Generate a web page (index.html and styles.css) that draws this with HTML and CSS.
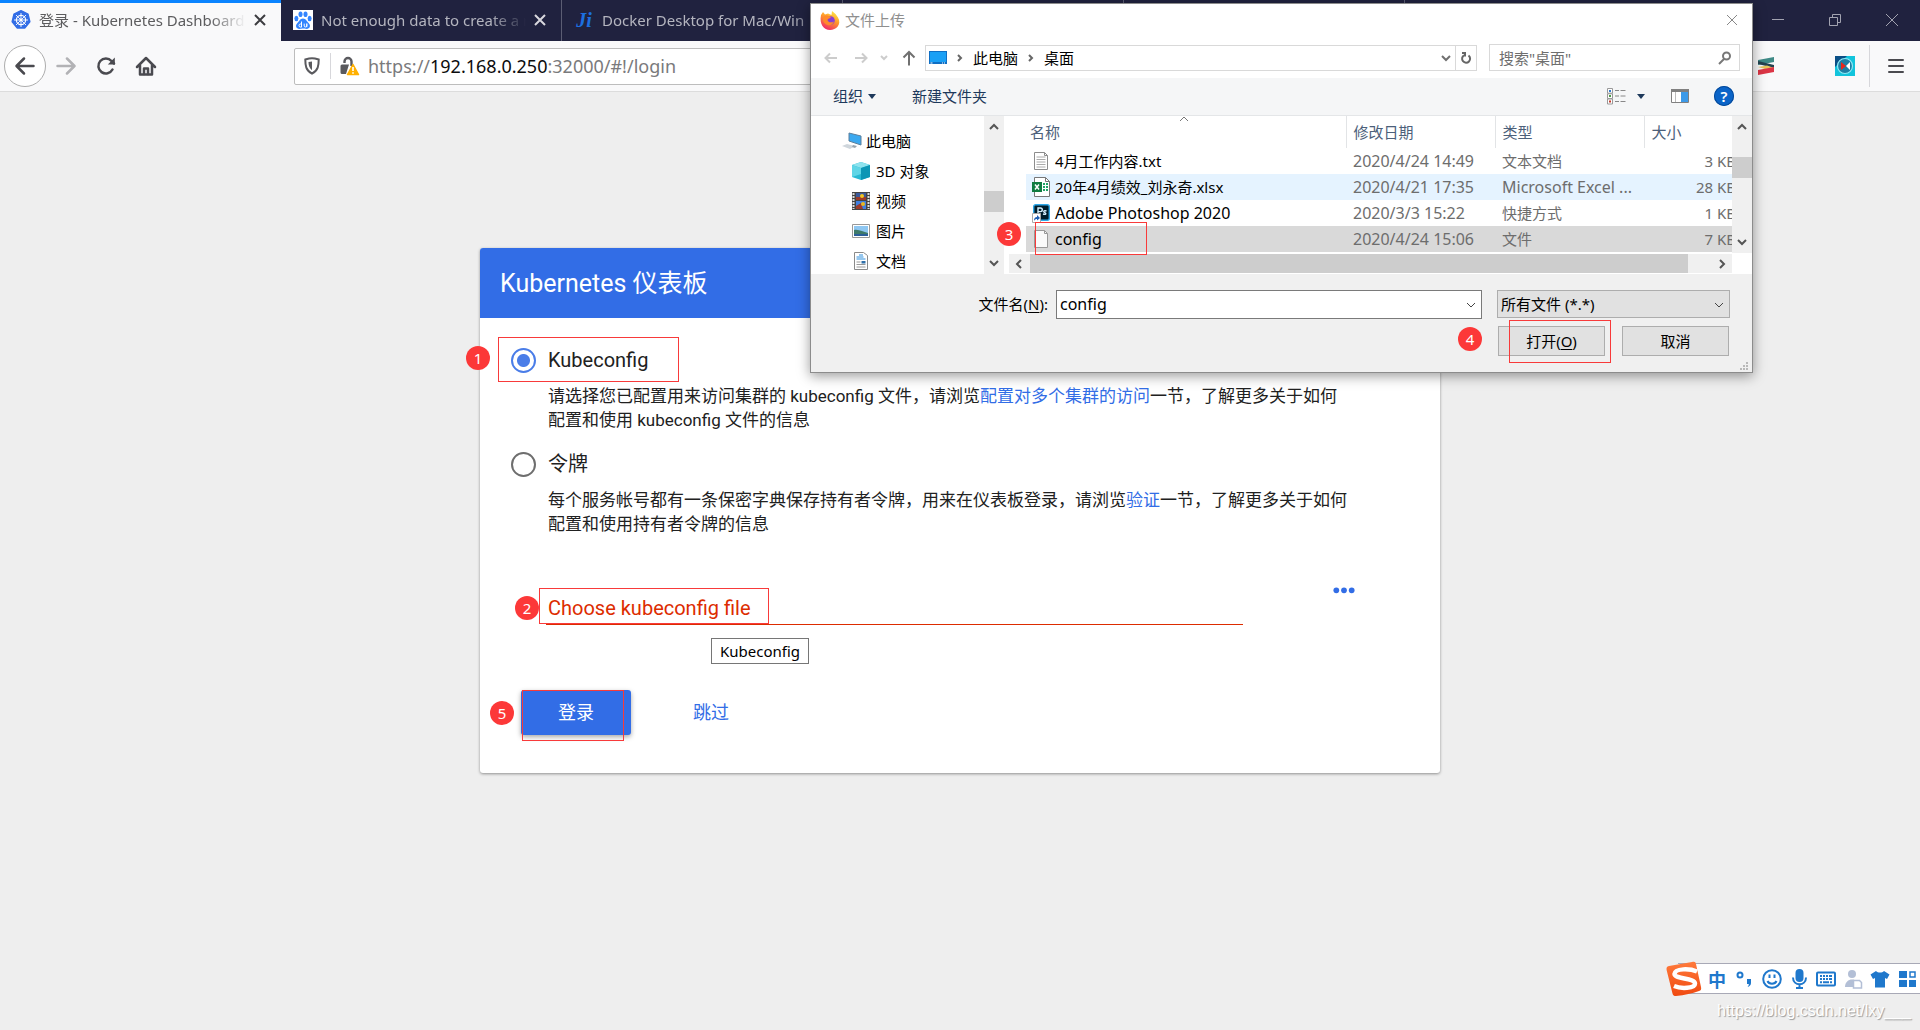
FILE: index.html
```html
<!DOCTYPE html>
<html lang="zh-CN">
<head>
<meta charset="utf-8">
<title>登录 - Kubernetes Dashboard</title>
<link rel="stylesheet" href="styles.css">
</head>
<body>
<header class="browser">
  <div class="tabstrip">
    <div class="tab tab-active">
      <svg class="favicon" viewBox="0 0 20 20"><path d="M10 .8l7 3.3 1.8 7.6-4.9 6.2H6.1L1.200 11.700 3 4.100z" fill="#326de6" stroke="#326de6" stroke-width="1.500" stroke-linejoin="round"/><g fill="none" stroke="#fff" stroke-width="1.200"><circle cx="10" cy="10" r="4.600"/><path d="M10 3v14M3 10h14M5 5l10 10M15 5L5 15" stroke-width=".9"/></g><circle cx="10" cy="10" r="1.400" fill="#fff"/></svg>
      <span class="tab-title">登录 - Kubernetes Dashboard</span>
      <button class="tab-close" aria-label="关闭标签页"><svg viewBox="0 0 12 12"><path d="M1 1l10 10M11 1L1 11"/></svg></button>
    </div>
    <div class="tab">
      <svg class="favicon" viewBox="0 0 20 20"><path fill="#fff" d="M0 0h20v20H0z"/><g fill="#3385ff"><ellipse cx="3.400" cy="8.500" rx="2" ry="2.700"/><ellipse cx="7.500" cy="4.300" rx="2" ry="2.800"/><ellipse cx="12.500" cy="4.300" rx="2" ry="2.800"/><ellipse cx="16.600" cy="8.500" rx="2" ry="2.700"/><path d="M10 8.500c3 0 3.800 3 5.800 4.800 2.200 2.200 1.200 5.700-2.300 5.700-1.500 0-2-.4-3.500-.4s-2 .4-3.500.4C3 19 2 15.500 4.200 13.300 6.200 11.500 7 8.500 10 8.500z"/></g><path d="M8.500 11.500v5.700M8.500 14H7.200c-1.600 0-1.600 3 0 3h1.300M11.200 13.600v2.400c0 1.300 2.600 1.300 2.600 0v-2.400 3.500" fill="none" stroke="#fff"/></svg>
      <span class="tab-title">Not enough data to create a new</span>
      <button class="tab-close" aria-label="关闭标签页"><svg viewBox="0 0 12 12"><path d="M1 1l10 10M11 1L1 11"/></svg></button>
    </div>
    <div class="tab">
      <span class="favicon favicon-text">Ji</span>
      <span class="tab-title">Docker Desktop for Mac/Win</span>
    </div>
    <div class="tab"></div>
    <div class="tab"></div>
    <div class="window-controls">
      <button aria-label="最小化"><svg viewBox="0 0 14 14"><path d="M1 6.500h12"/></svg></button>
      <button aria-label="还原"><svg viewBox="0 0 14 14"><path d="M1.500 4.500h8v8h-8zM4.500 4V1.500h8v8H10"/></svg></button>
      <button aria-label="关闭"><svg viewBox="0 0 14 14"><path d="M1 1l12 12M13 1L1 13"/></svg></button>
    </div>
  </div>
  <div class="navbar">
    <button class="nav-btn nav-back" aria-label="后退"><svg viewBox="0 0 20 20"><path d="M18.500 10H2M9 2.500L1.500 10 9 17.500"/></svg></button>
    <button class="nav-btn nav-off" aria-label="前进"><svg viewBox="0 0 20 20"><path d="M1.500 10H18M11 2.500l7.500 7.500-7.500 7.500"/></svg></button>
    <button class="nav-btn" aria-label="刷新"><svg viewBox="0 0 20 20"><path d="M16.500 13.500A7.500 7.500 0 1 1 15.500 5L18 7.500"/><path d="M18.800 1.500v7h-7z" fill="#4a4a4f" stroke="none"/></svg></button>
    <button class="nav-btn" aria-label="主页"><svg viewBox="0 0 20 20"><path d="M1 11l9-9 9 9M4 9.500V18.500h12V9.500"/><path d="M8 18v-5.500h4V18"/></svg></button>
    <div class="urlbar">
      <svg class="shield" viewBox="0 0 18 18"><path d="M9 1.200c2 0 4.200.5 6.700 1.300 0 6-.5 11-6.700 14.200C2.800 13.500 2.300 8.500 2.300 2.500 4.800 1.700 7 1.200 9 1.200z" fill="none" stroke="#5a5a5e" stroke-width="2"/><path d="M9 4.500v8.700C6.300 11 5.500 8.500 5.500 5z" fill="#5a5a5e"/></svg>
      <span class="url-sep"></span>
      <svg class="lock" viewBox="0 0 20 20"><path d="M4.500 7V5.500a3.500 3.500 0 0 1 7 0V10" fill="none" stroke="#5a5a5e" stroke-width="2.400"/><path d="M2 8.500h7L6 18H2a1.500 1.500 0 0 1-1.500-1.500V10A1.500 1.500 0 0 1 2 8.500z" fill="#5a5a5e"/><path d="M13 8.500l5.500 10h-11z" fill="#ffb000" stroke="#ffb000" stroke-width="1.500" stroke-linejoin="round"/><path d="M13 11v4M13 16.300v1.500" stroke="#fff" stroke-width="1.600"/></svg>
      <span class="url">https://<b>192.168.0.250</b>:32000/#!/login</span>
    </div>
    <div class="extensions">
      <svg class="ext-s" viewBox="0 0 18 20"><path d="M1 4l16-3v5L1 9z" fill="#3f8a86"/><path d="M1 5l16 4v3L1 8z" fill="#24424f"/><path d="M1 11l9-1.500 7 2.500-9 1z" fill="#e9c55b"/><path d="M1 14l16-3v5L1 19z" fill="#dc3545"/></svg>
      <svg class="ext-k" viewBox="0 0 20 20"><path fill="#12c4dc" d="M0 0h20v20H0z"/><path fill="#0a4f86" d="M0 0h12L0 11z"/><circle cx="10" cy="10" r="7.500" fill="#1e7fa5" stroke="#8fe9f5" stroke-width="1.200"/><path d="M6 6l5 4-5 4z" fill="#e8261c"/><path d="M15 6l-4 4 4 4z" fill="#fff"/></svg>
      <button class="menu-btn" aria-label="打开菜单"><svg viewBox="0 0 16 16"><path d="M1 2h14M1 8h14M1 14h14"/></svg></button>
    </div>
  </div>
</header>

<main class="page">
  <form class="card">
    <h1 class="card-title">Kubernetes 仪表板</h1>
    <div class="card-body">
      <div class="option marked">
        <label class="option-label"><input type="radio" name="auth" checked>Kubeconfig</label>
        <p class="option-text">请选择您已配置用来访问集群的 kubeconfig 文件，请浏览<a href="#access">配置对多个集群的访问</a>一节，了解更多关于如何<br>配置和使用 kubeconfig 文件的信息</p>
        <span class="box box-1"></span><span class="badge badge-1">1</span>
      </div>
      <div class="option">
        <label class="option-label"><input type="radio" name="auth">令牌</label>
        <p class="option-text">每个服务帐号都有一条保密字典保存持有者令牌，用来在仪表板登录，请浏览<a href="#auth">验证</a>一节，了解更多关于如何<br>配置和使用持有者令牌的信息</p>
      </div>
      <div class="file-row marked">
        <input class="file-input" type="text" placeholder="Choose kubeconfig file" aria-label="Choose kubeconfig file">
        <button type="button" class="more" aria-label="选择文件"><svg viewBox="0 0 20 6"><circle cx="3" cy="3" r="2.600"/><circle cx="10" cy="3" r="2.600"/><circle cx="17" cy="3" r="2.600"/></svg></button>
        <span class="box box-2"></span><span class="badge badge-2">2</span>
        <span class="tooltip" role="tooltip">Kubeconfig</span>
      </div>
      <div class="actions marked">
        <button type="button" class="login">登录</button>
        <button type="button" class="skip">跳过</button>
        <span class="box box-5"></span><span class="badge badge-5">5</span>
      </div>
    </div>
  </form>
</main>

<section class="dialog" role="dialog" aria-label="文件上传">
  <div class="dlg-title">
    <svg class="firefox" viewBox="0 0 20 20"><defs><linearGradient id="fx" x1=".8" y1="0" x2=".3" y2="1"><stop offset="0" stop-color="#fff04a"/><stop offset=".45" stop-color="#ff9a2b"/><stop offset="1" stop-color="#f0246b"/></linearGradient></defs><path d="M1 5l2-3 2 2.500 3-1L11.500 5 12 1l3.500 3 2.500 3.500c4 7-2 12.500-8 12.500S-1 14 1 5z" fill="url(#fx)"/><circle cx="10.500" cy="10.500" r="4.300" fill="#8a3fd1"/><path d="M4 6c3-1 5 0 7 1-1 2-3 1-3.500 3 .5 2.500 4 3 6.500 1.500-1 4-6 5-9 2S3 8 4 6z" fill="#ff8a2a"/></svg>
    <span>文件上传</span>
    <button class="dlg-close" aria-label="关闭"><svg viewBox="0 0 12 12"><path d="M1 1l10 10M11 1L1 11"/></svg></button>
  </div>
  <div class="dlg-nav">
    <button class="dn dn-off" aria-label="后退"><svg viewBox="0 0 14 12"><path d="M13 6H2M6 1.500L1.500 6 6 10.500"/></svg></button>
    <button class="dn dn-off" aria-label="前进"><svg viewBox="0 0 14 12"><path d="M1 6h11M8 1.500L12.500 6 8 10.500"/></svg></button>
    <button class="dn dn-off dn-small" aria-label="最近位置"><svg viewBox="0 0 14 12"><path d="M4 4l3 3 3-3"/></svg></button>
    <button class="dn dn-up" aria-label="上移"><svg viewBox="0 0 14 16"><path d="M7 15.500V2M1.500 7.500L7 2l5.500 5.500"/></svg></button>
    <div class="address">
      <svg class="desk" viewBox="0 0 18 13"><path d="M0 0h18v13H0z" fill="#0f6fc4"/><path d="M1 1h16v10H1z" fill="#1aa0f5"/><path d="M1.500 12h2M13 12h1M15 12h1" stroke="#fff"/></svg>
      <svg class="crumb-sep" viewBox="0 0 26 10"><path d="M11 2l3 3-3 3"/></svg><span>此电脑</span><svg class="crumb-sep" viewBox="0 0 26 10"><path d="M11 2l3 3-3 3"/></svg><span>桌面</span>
      <svg class="addr-drop" viewBox="0 0 10 8"><path d="M1 2l4 4 4-4"/></svg>
      <button class="addr-refresh" aria-label="刷新"><svg viewBox="0 0 12 14"><path d="M8.500 4.500A4 4 0 1 1 4 4.300M2 2h3v3.500"/></svg></button>
    </div>
    <label class="search"><input type="text" placeholder='搜索"桌面"' aria-label='搜索"桌面"'><svg viewBox="0 0 14 14"><circle cx="8.500" cy="5" r="3.500"/><path d="M6 8l-5 5"/></svg></label>
  </div>
  <div class="dlg-tools">
    <button class="tool">组织<i class="caret"></i></button>
    <button class="tool">新建文件夹</button>
    <div class="tool-right">
      <button class="tool view" aria-label="更改视图"><svg viewBox="0 0 19 17"><g fill="#fff" stroke="#999"><path d="M.5.5h5v4.700h-5zM.5 5.800h5v4.700h-5zM.5 11h5v5h-5z"/></g><path d="M2 2h2v2H2z" fill="#2f7bd0"/><path d="M2 7h2v2H2z" fill="#4b9a45"/><path d="M2 12.500h2v2H2z" fill="#c63a2b"/><path d="M8 2.500h4M13.500 2.500h5M8 8h4M13.500 8h5M8 13.500h4M13.500 13.500h5" stroke="#888"/></svg><i class="caret"></i></button>
      <button class="tool" aria-label="预览窗格"><svg class="pane-icon" viewBox="0 0 18 14"><path d="M.5.5h17v13H.5z" fill="#fff" stroke="#808080"/><path d="M0 0h18v3H0z" fill="#808080"/><path d="M10 3h7v10h-7z" fill="#3d9ae8"/><path d="M4.500 3v10" stroke="#bbb"/></svg></button>
      <button class="help" aria-label="帮助">?</button>
    </div>
  </div>
  <div class="panes marked">
    <ul class="tree">
      <li class="tree-root"><svg viewBox="0 0 20 18"><path d="M7 1l12 3v9L7 9z" fill="#3ba9f0" stroke="#5c7f9c"/><path d="M0 14l5-2 8 2-5 3z" fill="#cfd6dc"/><path d="M11 13l4 1-2 2-3-1z" fill="#9aa5ae"/></svg>此电脑</li>
      <li><svg viewBox="0 0 18 18"><path d="M9 0l9 3v12l-9 3-9-3V3z" fill="#28b9d3"/><path d="M9 0l9 3-9 3-9-3z" fill="#8fe3ee"/><path d="M9 6l9-3v12l-9 3z" fill="#0d96b5"/><path d="M0 3l9 3v6L0 15z" fill="#5fd5e6"/></svg>3D 对象</li>
      <li><svg viewBox="0 0 18 18"><path d="M0 0h18v18H0z" fill="#444"/><path d="M1.500 1v16M16.500 1v16" stroke="#ddd" stroke-width="2" stroke-dasharray="2 1"/><path d="M4 1h10v7H4z" fill="#3a5a9c"/><path d="M4 9h10v8H4z" fill="#3f7fe0"/><path d="M4 5h10v3H4zM4 14l5-3 2 6H4z" fill="#9c3a2a"/><circle cx="10" cy="4" r="2" fill="#f3c522"/><circle cx="11" cy="12" r="2" fill="#e8b81f"/></svg>视频</li>
      <li><svg viewBox="0 0 18 18"><path d="M.5 2.500h17v13H.5z" fill="#fff" stroke="#999"/><path d="M2 4h14v10H2z" fill="#8ec7f2"/><path d="M2 8c5-1 9 2 14 3v3H2z" fill="#3e7a6a"/><path d="M2 12h14v2H2z" fill="#2b5f9a"/></svg>图片</li>
      <li><svg viewBox="0 0 18 18"><path d="M2.500.5h9l4 3v14h-13z" fill="#fff" stroke="#8a8a8a"/><path d="M4.500 7h9M4.500 5h7M7 3h4" stroke="#2f8fdd" stroke-width="1.200"/><path d="M4.500 10h4M4.500 12.500h9M4.500 15h9" stroke="#999"/><path d="M9.500 9h4v2.500h-4z" fill="#2f6fa8"/></svg>文档</li>
    </ul>
    <div class="vscroll vscroll-tree"><svg viewBox="0 0 10 8"><path d="M1 6l4-4 4 4"/></svg><i class="thumb"></i><svg viewBox="0 0 10 8"><path d="M1 2l4 4 4-4"/></svg></div>
    <div class="files">
      <div class="list-row">
        <div class="list">
          <table>
            <colgroup><col class="c-name"><col class="c-date"><col class="c-type"><col class="c-size"></colgroup>
            <thead><tr><th>名称<svg class="sort" viewBox="0 0 10 6"><path d="M1 5l4-4 4 4"/></svg></th><th>修改日期</th><th>类型</th><th>大小</th></tr></thead>
            <tbody>
              <tr><td><svg viewBox="0 0 18 20"><path d="M2.500 1.500h10l3 3v14h-13z" fill="#fff" stroke="#8c8c8c"/><path d="M12.500 1.500v3h3" fill="none" stroke="#8c8c8c"/><path d="M4.500 6h9M4.500 8.500h9M4.500 11h9M4.500 13.500h9M4.500 16h9" stroke="#aaa"/></svg>4月工作内容.txt</td><td class="latin">2020/4/24 14:49</td><td>文本文档</td><td>3 KB</td></tr>
              <tr class="hover"><td><svg viewBox="0 0 18 20"><path d="M2.500.5h11l4 4v15h-15z" fill="#fff" stroke="#777"/><path d="M13.500.5v4h4" fill="none" stroke="#777"/><path d="M11 6h2v2h-2zM14 6h2v2h-2zM11 9h2v2h-2zM14 9h2v2h-2zM11 12h2v2h-2zM14 12h2v2h-2z" fill="#21a366"/><path d="M0 5h10v10H0z" fill="#107c41"/><path d="M3 7.500l4 5M7 7.500l-4 5" stroke="#fff" stroke-width="1.500"/></svg>20年4月绩效_刘永奇.xlsx</td><td class="latin">2020/4/21 17:35</td><td class="latin">Microsoft Excel ...</td><td>28 KB</td></tr>
              <tr><td><svg viewBox="0 0 18 20"><rect x="1.700" y="1.700" width="15.600" height="15.600" rx="2" fill="#001d2b" stroke="#2fa8e8" stroke-width="1.400"/><path d="M6 11V5h2.500a1.800 1.800 0 0 1 0 3.600H6M14.500 8c-3-1-3.500 1-1.700 1.700s1.200 2.300-1.800 1.300" fill="none" stroke="#d6f1ff" stroke-width="1.400"/><path d="M.5 10.500h8v9h-8z" fill="#fff" stroke="#aaa"/><path d="M2 18c0-3 1-4 3-4v-2l3 3-3 2.500V16c-1.500 0-2 .5-3 2z" fill="#1d5fb5"/></svg><span class="latin">Adobe Photoshop 2020</span></td><td class="latin">2020/3/3 15:22</td><td>快捷方式</td><td>1 KB</td></tr>
              <tr class="selected"><td><svg viewBox="0 0 18 20"><path d="M2.500 1.500h10l3 3v14h-13z" fill="#fafafa" stroke="#999"/><path d="M12.500 1.500v3h3" fill="none" stroke="#999"/></svg><span class="latin">config</span></td><td class="latin">2020/4/24 15:06</td><td>文件</td><td>7 KB</td></tr>
            </tbody>
          </table>
        </div>
        <div class="vscroll vscroll-list"><svg viewBox="0 0 10 8"><path d="M1 6l4-4 4 4"/></svg><i class="thumb"></i><svg viewBox="0 0 10 8"><path d="M1 2l4 4 4-4"/></svg></div>
      </div>
      <div class="hscroll"><svg viewBox="0 0 8 10"><path d="M6 1L2 5l4 4"/></svg><i class="thumb"></i><svg viewBox="0 0 8 10"><path d="M2 1l4 4-4 4"/></svg></div>
    </div>
    <span class="box box-3"></span><span class="badge badge-3">3</span>
  </div>
  <div class="dlg-foot marked">
    <div class="name-row">
      <label class="name-label" for="fname">文件名(<u>N</u>):</label>
      <div class="combo"><input id="fname" type="text" value="config"><svg viewBox="0 0 10 8"><path d="M1 2l4 4 4-4"/></svg></div>
      <div class="filter"><select aria-label="文件类型"><option>所有文件 (*.*)</option></select><svg viewBox="0 0 10 8"><path d="M1 2l4 4 4-4"/></svg></div>
    </div>
    <div class="btn-row"><button class="dlg-btn">打开(<u>O</u>)</button><button class="dlg-btn">取消</button></div>
    <svg class="grip" viewBox="0 0 8 8"><path d="M6 0h2v2H6zM3 3h2v2H3zM6 3h2v2H6zM0 6h2v2H0zM3 6h2v2H3zM6 6h2v2H6z" fill="#b8b8b8"/></svg>
    <span class="box box-4"></span><span class="badge badge-4">4</span>
  </div>
</section>

<aside class="ime">
  <svg class="ime-logo" viewBox="0 0 36 36"><defs><linearGradient id="so" x1="0" y1="0" x2="0" y2="1"><stop offset="0" stop-color="#ff7a3c"/><stop offset="1" stop-color="#f04a10"/></linearGradient></defs><path d="M3 5L26 1c3-.5 3.500 0 4 2l5 23c.5 2.500 0 3.500-2 4-7 2.500-14 4-23 5-2 0-3-.5-3.500-2.500L.6 9C.3 6.500.8 5.500 3 5z" fill="url(#so)"/><path d="M31 10.500C24 7.500 9 7 8.500 13c0 5 20.500 4 20.500 9.500 0 5-14 5.500-21 2.500" fill="none" stroke="#fff" stroke-width="4.500"/></svg>
  <span class="ime-zh">中</span>
  <svg viewBox="0 0 20 20"><circle cx="5" cy="6" r="2.500" fill="none" stroke="#1f78cc" stroke-width="2"/><path d="M12 10h4v4c0 2-1.500 3.500-3.500 4 1-1 1.300-2 1.300-3H12z" fill="#1f78cc"/></svg>
  <svg viewBox="0 0 20 20"><g fill="none" stroke="#1f78cc" stroke-width="2"><circle cx="10" cy="10" r="8.800"/><path d="M5.500 12c1.500 3.500 7.500 3.500 9 0M7.500 5.500v3.500M12.500 5.500v3.500"/></g></svg>
  <svg viewBox="0 0 20 20"><rect x="6.500" y="0" width="8" height="13" rx="4" fill="#1f78cc"/><path d="M4 8.500c0 9 13 9 13 0M10.500 15v4M7 19h7" fill="none" stroke="#1f78cc" stroke-width="2"/></svg>
  <svg viewBox="0 0 20 20"><rect x="1" y="3.500" width="18" height="13" rx="1" fill="none" stroke="#1f78cc" stroke-width="2"/><path d="M4 7h2M7 7h2M10 7h2M13 7h3M4 10h2M7 10h2M10 10h2M13 10h3M4 13.300h2M7 13.300h6M14 13.300h2" stroke="#1f78cc" stroke-width="2"/></svg>
  <svg viewBox="0 0 20 20"><circle cx="9" cy="5" r="4" fill="#b3bfd6"/><path d="M2 18c0-10 14-10 14 0z" fill="#b3bfd6"/><path d="M10.500 11.500h6l2 2v5.500h-8z" fill="#fff" stroke="#b3bfd6" stroke-width="1.500"/></svg>
  <svg viewBox="0 0 20 20"><path d="M6 2c2 2 6 2 8 0l5.500 3.500L17 10l-2-1v9.500H5V9l-2 1L.5 5.500z" fill="#1f78cc"/></svg>
  <svg viewBox="0 0 20 20"><path d="M2 2h8v7H2zM2 11h8v7H2zM12 11h7v7h-7z" fill="#1f78cc"/><path d="M13 3h5v5h-5z" fill="none" stroke="#1f78cc" stroke-width="1.500"/></svg>
</aside>
<span class="watermark">https://blog.csdn.net/lxy___</span>
</body>
</html>
```
FILE: styles.css
```css
* { box-sizing: border-box; }
body {
  margin: 0;
  min-height: 100vh;
  position: relative;
  overflow: hidden;
  background: #eee;
  font: 15px/20px "Noto Sans", "Noto Sans CJK SC", sans-serif;
  color: #000;
}
button, input, select { font: inherit; color: inherit; margin: 0; padding: 0; border: 0; background: none; border-radius: 0; outline: 0; }
svg { display: block; flex: none; overflow: visible; }

/* browser chrome */
.tabstrip { display: flex; height: 41px; background: #20223f; }
.tab { display: flex; align-items: center; gap: 8px; width: 281px; padding: 0 15px 1px 12px; border-right: 1px solid #5b5d73; color: #b4b5bf; }
.tab-active { background: #f9f9fa; border-top: 3px solid #0a84ff; border-right: 0; color: #5c5c5e; padding-bottom: 4px; padding-left: 11px; }
.favicon { width: 20px; height: 20px; flex: none; }
.favicon-text { font: italic bold 20px/20px "Liberation Serif", serif; color: #1c6fe0; text-align: center; }
.tab-title { flex: 1; overflow: hidden; white-space: nowrap; -webkit-mask-image: linear-gradient(to left, transparent, #000 36px); mask-image: linear-gradient(to left, transparent, #000 36px); }
.tab-close { width: 12px; height: 12px; }
.tab-close svg { width: 12px; fill: none; stroke: currentColor; stroke-width: 2; }
.tab-active .tab-close { color: #3c3c40; }
.tab:not(.tab-active) .tab-close { color: #d8d8de; }
.window-controls { margin-left: auto; display: flex; }
.window-controls button { width: 57px; display: grid; place-items: center; padding-bottom: 2px; }
.window-controls svg { width: 14px; fill: none; stroke: #a2a3b0; }
.navbar { display: flex; align-items: center; height: 51px; padding: 0 16px 0 4px; background: #f9f9fa; border-bottom: 1px solid #dcdcdc; }
.nav-btn { width: 40px; height: 42px; display: grid; place-items: center; }
.nav-btn svg { width: 20px; fill: none; stroke: #4a4a4f; stroke-width: 2.5; stroke-linecap: round; stroke-linejoin: round; }
.nav-back { width: 42px; border: 1px solid #adadad; border-radius: 50%; background: #fff; }
.nav-off { opacity: .4; }
.urlbar { flex: 1; display: flex; align-items: center; height: 37px; margin: 0 200px 0 128px; padding-left: 8px; background: #fff; border: 1px solid #bdbdbd; border-radius: 2px; }
.shield { width: 18px; }
.url-sep { width: 1px; height: 26px; margin: 0 9px; background: #d7d7db; }
.lock { width: 20px; }
.url { margin-left: 8px; font-size: 18px; color: #7a7a7c; }
.url b { font-weight: 400; color: #0c0c0d; }
.extensions { display: flex; align-items: center; }
.ext-s { width: 18px; margin-right: 60px; }
.ext-k { width: 20px; margin-right: 14px; }
.menu-btn { height: 42px; padding-left: 18px; border-left: 1px solid #d7d7db; }
.menu-btn svg { width: 16px; stroke: #4a4a4f; stroke-width: 2; stroke-linecap: round; }

/* login card */
.page { padding: 156px 24px 24px; }
.card { max-width: 960px; margin: 0 auto; background: #fff; border-radius: 3px; box-shadow: 0 1px 3px rgba(0, 0, 0, .4); font-family: Roboto, "Noto Sans CJK SC", sans-serif; color: #212121; }
.card-title { margin: 0; height: 70px; padding: 0 20px; border-radius: 3px 3px 0 0; background: #326de6; color: #fff; font-weight: 400; font-size: 25px; line-height: 72px; }
.card-body { padding: 18px 24px 38px 31px; }
.marked { position: relative; }
.option { margin-bottom: 8px; }
.option-label { display: flex; align-items: center; gap: 12px; height: 48px; font-size: 20px; }
.option-label input { appearance: none; width: 25px; height: 25px; border: 2px solid #6e6e6e; border-radius: 50%; }
.option-label input:checked { border-color: #4a7de8; background: radial-gradient(circle, #4a7de8 6px, transparent 7px); }
.option-text { margin: 0 0 0 37px; font-size: 17px; line-height: 24px; }
.option-text a { color: #326de6; text-decoration: none; }
.file-row { display: flex; align-items: flex-start; margin: 40px 53px 0 35px; padding-top: 16px; height: 66px; }
.file-input { flex: 1; height: 33px; padding-left: 2px; border-bottom: 1px solid #dd2c00; font-size: 20px; }
.file-input::placeholder { color: #dd2c00; opacity: 1; }
.more { margin: -5px 8px 0 90px; }
.more svg { width: 22px; fill: #326de6; }
.tooltip { position: absolute; left: 165px; top: 62px; width: 98px; height: 26px; border: 1px solid #767676; background: #fff; color: #000; font: 15px/24px "Noto Sans", sans-serif; text-align: center; }
.actions { display: flex; gap: 40px; margin: 48px 0 0 10px; font-size: 18px; }
.login { width: 110px; height: 45px; border-radius: 3px; background: #326de6; color: #fff; box-shadow: 0 2px 5px rgba(0, 0, 0, .35); }
.skip { width: 80px; height: 45px; color: #326de6; }

/* numbered marks */
.box { position: absolute; border: 1px solid #f83a3a; pointer-events: none; }
.badge { position: absolute; width: 24px; height: 24px; border-radius: 50%; background: #fc3838; color: #fff; font: 15px/24px "Noto Sans", sans-serif; text-align: center; }
.box-1 { left: -13px; top: 1px; width: 181px; height: 45px; }
.badge-1 { left: -45px; top: 10px; }
.box-2 { left: -7px; top: 12px; width: 230px; height: 36px; }
.badge-2 { left: -31px; top: 20px; }
.box-5 { left: 1px; top: 0; width: 102px; height: 51px; }
.badge-5 { left: -31px; top: 11px; }
.box-3 { left: 224px; top: 106px; width: 112px; height: 33px; }
.badge-3 { left: 186px; top: 106px; }
.box-4 { left: 698px; top: 46px; width: 102px; height: 43px; }
.badge-4 { left: 647px; top: 53px; }

/* file picker window */
.dialog { position: absolute; left: 810px; top: 3px; width: 943px; background: #fff; border: 1px solid #8c8c8c; box-shadow: 0 3px 12px rgba(0, 0, 0, .4); }
.dlg-title { display: flex; align-items: center; gap: 5px; height: 36px; padding: 0 14px 4px 9px; color: #8f8f8f; }
.firefox { width: 20px; }
.dlg-close { margin-left: auto; }
.dlg-close svg { width: 12px; fill: none; stroke: #888; }
.dlg-nav { display: flex; align-items: center; height: 38px; padding: 0 12px 3px 5px; }
.dn { width: 30px; display: grid; place-items: center; }
.dn svg { width: 14px; fill: none; stroke: #707070; stroke-width: 2; }
.dn-off { opacity: .35; }
.dn-small { width: 16px; }
.dn-up { width: 33px; }
.address { flex: 1; display: flex; align-items: center; height: 26px; padding-left: 3px; border: 1px solid #d9d9d9; }
.desk { width: 18px; }
.crumb-sep { width: 26px; fill: none; stroke: #666; stroke-width: 2; }
.addr-drop { width: 10px; margin: 0 4px 0 auto; fill: none; stroke: #707070; stroke-width: 2; }
.addr-refresh { width: 21px; height: 24px; display: grid; place-items: center; border-left: 1px solid #d9d9d9; }
.addr-refresh svg { width: 12px; fill: none; stroke: #666; stroke-width: 2; }
.search { display: flex; align-items: center; width: 251px; height: 27px; margin-left: 12px; padding: 0 7px 0 9px; border: 1px solid #d9d9d9; }
.search input { flex: 1; min-width: 0; }
.search input::placeholder { color: #6e6e6e; opacity: 1; }
.search svg { width: 14px; fill: none; stroke: #777; stroke-width: 2; }
.dlg-tools { display: flex; align-items: center; height: 38px; padding: 0 18px 1px 22px; background: #f5f6f7; border-bottom: 1px solid #e4e6e8; color: #1e395b; }
.tool { display: flex; align-items: center; margin-right: 36px; }
.caret { margin-left: 5px; border: 4px solid transparent; border-top: 5px solid #1e395b; border-bottom: 0; }
.tool-right { margin-left: auto; display: flex; align-items: center; }
.tool-right .tool { margin-right: 25px; }
.view { gap: 6px; }
.tool-right .view { margin-right: 26px; }
.view svg { width: 19px; }
.pane-icon { width: 18px; }
.help { width: 20px; height: 20px; border-radius: 50%; background: #0a64c8; box-shadow: inset 0 0 0 1px #064a9a; color: #fff; font-weight: 600; }
.panes { display: flex; height: 158px; }
.tree { flex: none; width: 173px; margin: 0; padding: 10px 0 0 41px; list-style: none; overflow: hidden; }
.tree li { display: flex; align-items: center; gap: 6px; height: 30px; }
.tree svg { width: 18px; }
.tree .tree-root { margin-left: -10px; gap: 4px; }
.tree .tree-root svg { width: 20px; }
.vscroll { flex: none; width: 20px; display: flex; flex-direction: column; align-items: center; padding: 6px 0; background: #f0f0f0; }
.vscroll svg, .hscroll svg { fill: none; stroke: #555; stroke-width: 2; }
.vscroll svg { width: 10px; height: 10px; }
.vscroll svg:last-child { margin-top: auto; }
.thumb { background: #cdcdcd; }
.vscroll .thumb { width: 20px; height: 21px; }
.vscroll-tree .thumb { margin-top: 59px; }
.vscroll-list .thumb { margin-top: 25px; }
.files { flex: 1; min-width: 0; display: flex; flex-direction: column; padding-left: 5px; }
.list-row { display: flex; height: 137px; }
.list { flex: 1; min-width: 0; margin-left: 17px; overflow: hidden; }
table { table-layout: fixed; width: 710px; border-collapse: collapse; white-space: nowrap; }
.c-name { width: 320px; }
.c-date, .c-type { width: 149px; }
th { position: relative; height: 32px; padding: 0 7px; border-right: 1px solid #e2e4e6; color: #4c607a; font-weight: 400; text-align: left; }
th:first-child { padding-left: 4px; }
th:last-child { border: 0; }
.sort { position: absolute; left: 153px; top: 0; width: 10px; fill: none; stroke: #777; }
td { height: 26px; padding: 0 7px; color: #6d6d6d; }
td:first-child { display: flex; align-items: center; gap: 5px; padding-left: 6px; color: #000; }
td:last-child { padding: 0; text-align: right; }
td svg { width: 18px; height: 20px; }
.latin { font-size: 16px; }
.hover { background: #e5f3ff; }
.selected { background: #d9d9d9; }
.hscroll { display: flex; align-items: center; height: 19px; margin: 1px 20px 0 0; padding: 0 6px; background: #f0f0f0; }
.hscroll svg { width: 8px; }
.hscroll .thumb { width: 658px; height: 19px; margin: 0 auto 0 7px; }
.dlg-foot { padding: 16px 22px 16px 0; background: #f0f0f0; }
.name-row { display: flex; }
.name-label { width: 245px; padding-right: 8px; text-align: right; line-height: 28px; }
.combo, .filter { position: relative; height: 29px; }
.combo { flex: 1; margin-right: 15px; }
.combo input { width: 100%; height: 29px; padding: 0 0 2px 3px; background: #fff; border: 1px solid #7a7a7a; font-size: 16px; }
.filter { width: 233px; }
.filter select { appearance: none; width: 100%; height: 28px; padding-left: 3px; background: #e1e1e1; border: 1px solid #adadad; }
.combo svg, .filter svg { position: absolute; right: 6px; top: 11px; width: 10px; fill: none; stroke: #444; pointer-events: none; }
.btn-row { display: flex; justify-content: flex-end; gap: 17px; margin: 7px 1px 0 0; }
.dlg-btn { width: 107px; height: 30px; background: #e1e1e1; border: 1px solid #adadad; }
u { text-underline-offset: 2px; }
.grip { position: absolute; right: 4px; bottom: 2px; width: 8px; }

/* input-method bar */
.ime { position: absolute; right: 0; bottom: 36px; display: flex; align-items: center; gap: 7px; height: 31px; padding-right: 3px; background: #fff; border: solid #a8a9b6; border-width: 1px 0; }
.ime svg { width: 20px; }
.ime .ime-logo { width: 36px; margin: 0 -1px 0 -12px; }
.ime-zh { width: 20px; font: bold 18px/28px "Noto Sans CJK SC", sans-serif; color: #1f78cc; }
.watermark { position: absolute; right: 9px; bottom: 9px; font: 16px/20px "Liberation Sans", sans-serif; color: #fff; text-shadow: 1px 1px 1px #999; }
```
